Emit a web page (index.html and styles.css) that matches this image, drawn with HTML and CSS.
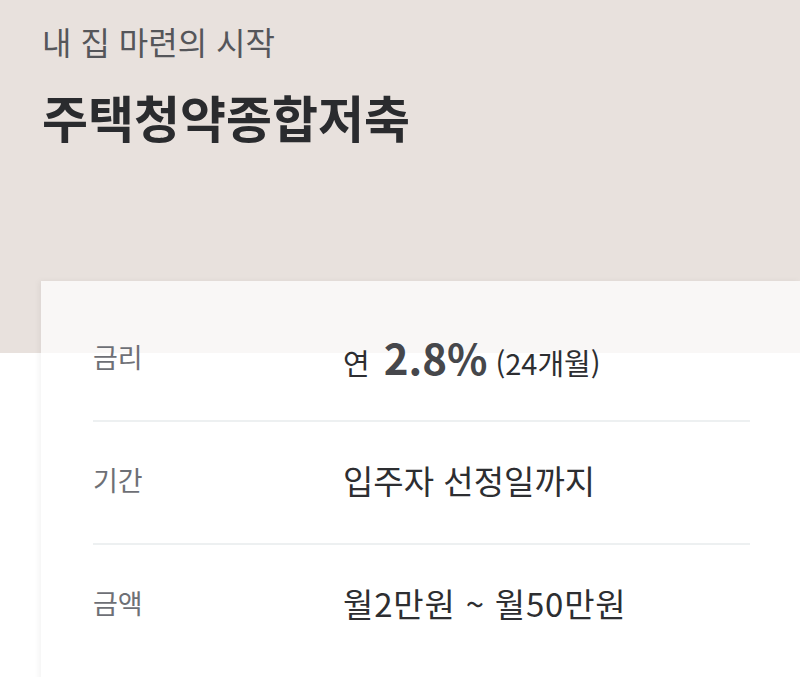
FILE: index.html
```html
<!DOCTYPE html>
<html lang="ko">
<head>
  <meta charset="UTF-8" />
  <meta name="viewport" content="width=device-width, initial-scale=1.0" />
  <title>주택청약종합저축</title>
  <link rel="stylesheet" href="styles.css">
</head>
<body>

  <!-- 상단 타이틀 -->
  <header class="hero">
    <p class="hero-sub">내 집 마련의 시작</p>
    <h1 class="hero-title">주택청약종합저축</h1>
  </header>

  <!-- 상품 요약 -->
  <section class="summary">
    <div class="row">
      <span class="label">금리</span>
      <span class="value small">연<b class="rate">2.8%</b>(24개월)</span>
    </div>
    <div class="row">
      <span class="label">기간</span>
      <span class="value">입주자 선정일까지</span>
    </div>
    <div class="row last">
      <span class="label">금액</span>
      <span class="value wide">월2만원 ~ 월50만원</span>
    </div>
  </section>

</body>
</html>
```

FILE: styles.css
```css
body {
  margin: 0;
  overflow: hidden;
  font-family: "Noto Sans CJK KR", "Noto Sans", sans-serif;
  background: linear-gradient(#e8e1dd 353px, #ffffff 353px);
}

.hero {
  padding: 19px 0 0 42px;
  height: 259px;
  box-sizing: border-box;
}

.hero-sub {
  margin: 0;
  font-size: 32px;
  font-weight: 400;
  color: #55565a;
  line-height: 44px;
}

.hero-title {
  margin: 21px 0 0;
  font-size: 50px;
  font-weight: 700;
  color: #2a2b2e;
  line-height: 64px;
}

.summary {
  margin-left: 41px;
  margin-top: 22px;
  padding: 18px 50px 0 52px;
  background: rgba(255, 255, 255, 0.72);
  box-shadow: -2px 0 6px rgba(0, 0, 0, 0.05);
  min-height: 400px;
}

.row {
  display: flex;
  align-items: center;
  height: 115px;
  padding-bottom: 6px;
  border-bottom: 2px solid #edf0f1;
}

.row.last {
  border-bottom: none;
}

.label {
  width: 250px;
  font-size: 27px;
  color: #6e7076;
}

.value {
  font-size: 33px;
  color: #2d2e31;
}

.value.small {
  font-size: 29px;
}

.value.wide {
  letter-spacing: 0.8px;
}

.rate {
  margin: 0 8px 0 14px;
  font-size: 42px;
  font-weight: 700;
  color: #46474b;
}
```
